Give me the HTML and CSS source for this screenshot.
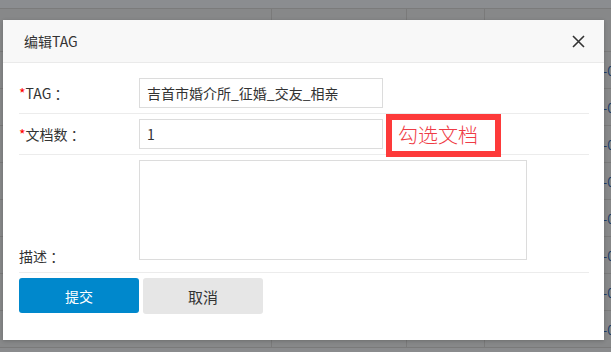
FILE: index.html
```html
<!DOCTYPE html>
<html lang="zh-CN">
<head>
  <meta charset="UTF-8" />
  <meta name="viewport" content="width=device-width, initial-scale=1.0"/>
  <title>编辑TAG</title>
  <link rel="stylesheet" href="styles.css">
</head>
<body>
  <div class="page">
    <div class="topbar"></div>
    <div class="row head">
      <div class="cell c1"></div>
      <div class="cell c2"></div>
      <div class="cell c3"></div>
      <div class="cell c4"><span class="th">时间</span></div>
    </div>
    <div class="row"><div class="cell c1"></div><div class="cell c2"></div><div class="cell c3"></div><div class="cell c4"><span class="td">2019-07-12</span></div></div>
    <div class="row"><div class="cell c1"></div><div class="cell c2"></div><div class="cell c3"></div><div class="cell c4"><span class="td">2019-07-12</span></div></div>
    <div class="row"><div class="cell c1"></div><div class="cell c2"></div><div class="cell c3"></div><div class="cell c4"><span class="td">2019-07-12</span></div></div>
    <div class="row"><div class="cell c1"></div><div class="cell c2"></div><div class="cell c3"></div><div class="cell c4"><span class="td">2019-07-12</span></div></div>
    <div class="row"><div class="cell c1"></div><div class="cell c2"></div><div class="cell c3"></div><div class="cell c4"><span class="td">2019-07-12</span></div></div>
    <div class="row"><div class="cell c1"></div><div class="cell c2"></div><div class="cell c3"></div><div class="cell c4"><span class="td">2019-07-12</span></div></div>
    <div class="row"><div class="cell c1"></div><div class="cell c2"></div><div class="cell c3"></div><div class="cell c4"><span class="td">2019-07-12</span></div></div>
    <div class="row"><div class="cell c1"></div><div class="cell c2"></div><div class="cell c3"></div><div class="cell c4"><span class="td">2019-07-12</span></div></div>
  </div>

  <div class="modal">
    <div class="modal-head">
      <span class="title">编辑TAG</span>
      <svg class="close" width="13" height="13" viewBox="0 0 13 13">
        <path d="M1 1 L12 12 M12 1 L1 12" stroke="#333" stroke-width="1.6" fill="none"/>
      </svg>
    </div>
    <div class="modal-body">
      <div class="form-row r1">
        <label class="lbl"><span class="req">*</span>TAG&nbsp;：</label>
        <input class="ipt" type="text" value="吉首市婚介所_征婚_交友_相亲">
      </div>
      <div class="form-row r2">
        <label class="lbl"><span class="req">*</span>文档数&nbsp;：</label>
        <input class="ipt" type="text" value="1">
        <div class="mark">勾选文档</div>
      </div>
      <div class="form-row r3">
        <label class="lbl lbl-bottom">描述&nbsp;：</label>
        <textarea class="txt"></textarea>
      </div>
      <div class="actions">
        <button class="btn btn-primary">提交</button>
        <button class="btn btn-default">取消</button>
      </div>
    </div>
  </div>
</body>
</html>
```

FILE: styles.css
```css
* {
  box-sizing: border-box;
}

body {
  margin: 0;
  width: 611px;
  height: 352px;
  overflow: hidden;
  background-color: #8a8b8d;
  font-family: "Noto Sans CJK SC", "Liberation Sans", sans-serif;
  color: #333;
  position: relative;
}

.page {
  width: 611px;
}

.topbar {
  height: 9px;
  background-color: #8b8d90;
  border-bottom: 1px solid #7b7b7b;
}

.row {
  display: flex;
  height: 37px;
  border-bottom: 1px solid #7a7a7a;
  background-color: #878889;
}

.row.head {
  height: 43px;
}

.cell {
  height: 100%;
  border-left: 1px solid #7a7a7a;
}

.c1 {
  width: 271px;
  border-left: none;
}

.c2 {
  width: 135px;
}

.c3 {
  width: 78px;
}

.c4 {
  flex: 1;
  padding-left: 89px;
  display: flex;
  align-items: center;
  font-size: 13px;
  white-space: nowrap;
  overflow: hidden;
}

.th {
  color: #1d2a3a;
  font-weight: bold;
}

.td {
  color: #1f3d66;
}

.modal {
  position: absolute;
  left: 3px;
  top: 20px;
  width: 601px;
  height: 320px;
  background-color: #fff;
  box-shadow: 0 1px 4px rgba(0, 0, 0, 0.2);
}

.modal-head {
  height: 43px;
  background-color: #f8f8f8;
  border-bottom: 1px solid #eaeaea;
  display: flex;
  align-items: center;
  justify-content: space-between;
  padding: 0 19px 0 21px;
}

.title {
  font-size: 14px;
  color: #333;
}

.close {
  display: block;
  margin-top: 1px;
}

.modal-body {
  padding: 0 15px 0 16px;
}

.form-row {
  display: flex;
  align-items: center;
  border-bottom: 1px solid #ececec;
}

.r1 {
  padding: 15px 0 5px;
}

.r2 {
  padding: 5px 0 5px;
}

.r3 {
  padding: 5px 0 12px;
  align-items: flex-start;
}

.lbl {
  width: 120px;
  font-size: 14px;
  color: #333;
  line-height: 20px;
  white-space: nowrap;
}

.lbl-bottom {
  align-self: flex-end;
  margin-bottom: -6px;
}

.req {
  color: #f00;
}

.ipt {
  width: 244px;
  height: 30px;
  border: 1px solid #dcdcdc;
  padding: 0 7px;
  font-family: "Noto Sans CJK SC", "Liberation Sans", sans-serif;
  font-size: 14px;
  color: #333;
  outline: none;
}

.mark {
  width: 115px;
  height: 43px;
  margin-left: 3px;
  align-self: flex-start;
  margin-top: -5px;
  margin-bottom: -8px;
  border: 6px solid #fd3a3a;
  padding-left: 6px;
  font-size: 20px;
  line-height: 30px;
  color: #ef3b45;
  font-weight: 300;
  white-space: nowrap;
}

.txt {
  width: 388px;
  height: 100px;
  border: 1px solid #dcdcdc;
  resize: none;
  outline: none;
}

.actions {
  display: flex;
  gap: 4px;
  padding-top: 5px;
}

.btn {
  width: 120px;
  height: 35px;
  border: none;
  border-radius: 3px;
  font-family: "Noto Sans CJK SC", "Liberation Sans", sans-serif;
  font-size: 14px;
  cursor: pointer;
}

.btn-primary {
  background-color: #0088cc;
  color: #fff;
}

.btn-default {
  background-color: #e6e6e6;
  color: #333;
  font-size: 15px;
  height: 36px;
}
```
